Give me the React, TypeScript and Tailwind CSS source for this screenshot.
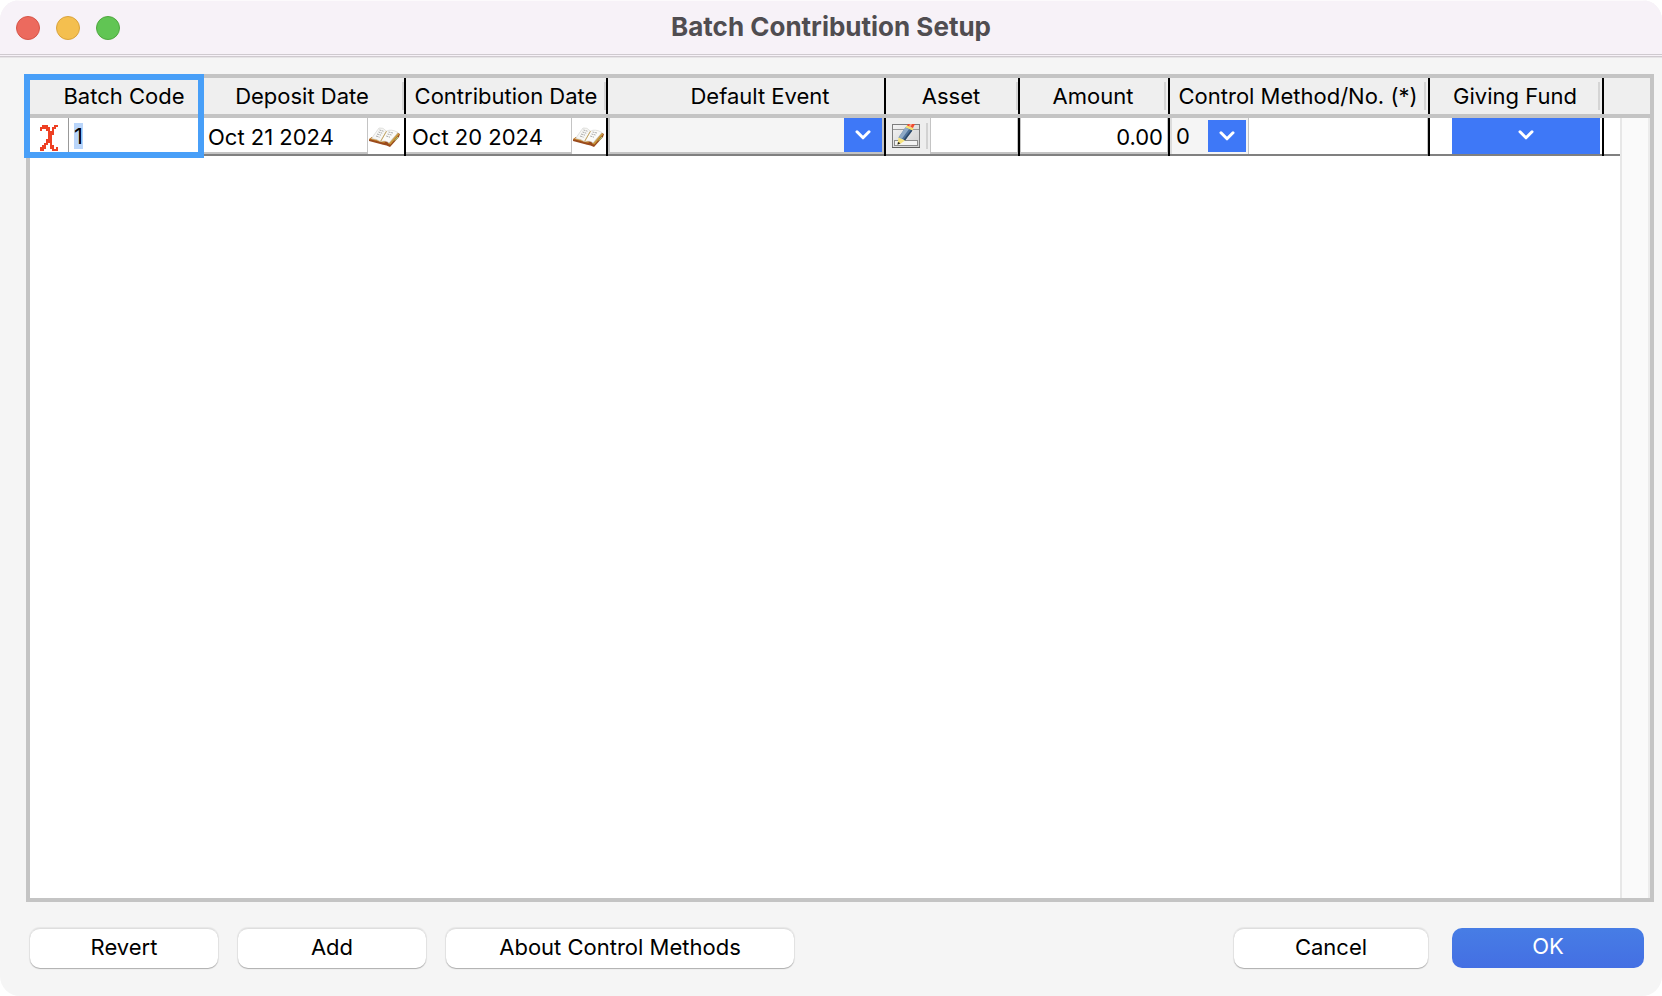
import { useEffect, useRef } from 'react';
import type { ReactNode } from 'react';
import clsx from 'clsx';

const columns = [
    { id: 'batch', title: 'Batch Code', width: 'w-[172px]', cell: 'pl-4' },
    { id: 'deposit', title: 'Deposit Date', width: 'w-[204px]', cell: 'border-r-2 border-black pr-0.5', grip: 'right-0' },
    { id: 'contribution', title: 'Contribution Date', width: 'w-[202px]', cell: 'border-r-2 border-black', grip: 'right-0' },
    { id: 'event', title: 'Default Event', width: 'w-[278px]', cell: 'border-r-2 border-black pl-7' },
    { id: 'asset', title: 'Asset', width: 'w-[134px]', cell: 'border-r-2 border-black pr-0.5', grip: 'right-0' },
    { id: 'amount', title: 'Amount', width: 'w-[150px]', cell: 'border-r-2 border-black pr-0.5', grip: 'right-0.5' },
    { id: 'control', title: 'Control Method/No. (*)', width: 'w-[260px]', cell: 'border-r-2 border-black pr-0.5', grip: 'right-0.5' },
    { id: 'fund', title: 'Giving Fund', width: 'w-[174px]', cell: 'border-r-2 border-black pr-0.5', grip: 'right-0.5' },
];

// one character per 2px dot
const chiRows = [
    '.XXX...XX',
    'XXXXX.XX.',
    'X..XX.X..',
    '....XXX..',
    '....XXX..',
    '....XX...',
    '....XX...',
    '...XXX...',
    '...XXX...',
    '..XX.X...',
    '.XX..XX..',
    'XXX..XX.X',
    'XX....XXX',
];

const ChiIcon = () => (
    <svg width="18" height="26" viewBox="0 0 9 13" shapeRendering="crispEdges" fill="#ee4023" aria-hidden="true">
        {chiRows.flatMap((row, y) =>
            row.split('').map((dot, x) => (dot === 'X' ? <rect key={`${x}-${y}`} x={x} y={y} width="1" height="1" /> : null))
        )}
    </svg>
);

const BookIcon = () => (
    <svg width="31" height="20" viewBox="0 0 31 20" fill="none" aria-hidden="true">
        <path d="M0 12.5 L3 10 L17 14 L28 5.5 L31 7 L30 10 L21 20 L17.5 18.5 L14 17.8 L0 14 Z" fill="#9a4a1c" />
        <path d="M28.5 6 L30.5 7 L21.5 17.5 L19 17 Z" fill="#c99a3d" />
        <path d="M0 12 L3 10 L16 14.5 L15.5 16 Z" fill="#c9882f" />
        <path d="M2.5 11.5 L10 1 Q14 0 17.5 4.2 L11.5 14.6 Q8 12 2.5 11.5 Z" fill="#f7f7f5" stroke="#cfcfcb" strokeWidth=".6" />
        <path d="M17.5 4.2 Q22 1.5 29 5.5 L20 16 Q17 13 11.5 14.6 Z" fill="#fbfbf9" stroke="#cfcfcb" strokeWidth=".6" />
        <path d="M17.5 4.2 L11.5 14.6" stroke="#c6a45e" strokeWidth="1" />
        <path d="M10.5 3 L14.5 4.2 M9.5 5 L13.2 6.2 M8 7 L12 8.2 M7 9 L10.5 10.2 M19.5 5 L24 6 M18.5 7 L22.5 8 M17.2 9 L21 10.2" stroke="#a3a3a3" strokeWidth=".9" strokeDasharray="2 .6" />
        <path d="M29 10 L26 13.5" stroke="#9fdc8d" strokeWidth="1" />
    </svg>
);

const PencilIcon = () => (
    <svg width="28" height="24" viewBox="0 0 28 24" fill="none" aria-hidden="true">
        <defs>
            <linearGradient id="panel" x1="0" y1="0" x2="1" y2="1">
                <stop offset="0" stopColor="#f4f4f4" />
                <stop offset="1" stopColor="#cfcfcf" />
            </linearGradient>
        </defs>
        <rect x=".5" y=".5" width="27" height="23" fill="url(#panel)" stroke="#7d7d7d" />
        <path d="M1 5.5 H27" stroke="#9a9a9a" />
        <path d="M0 23.5 H28" stroke="#5e5e5e" />
        <rect x="2.5" y="16.5" width="23" height="5" fill="#f3f3f3" stroke="#8c8c8c" />
        <path d="M16 0 H23 L21 4 L15 2 Z" fill="#ef4b2f" />
        <path d="M18 0 H20 L18.5 3.2 L16.8 2.6 Z" fill="#f9a08b" />
        <path d="M14.6 1.5 L21.6 4.5 L20.4 6.6 L13.4 3.6 Z" fill="#f4df6a" />
        <path d="M13.4 3.6 L20.4 6.6 L13 16.5 L6.5 13.5 Z" fill="#4d7199" />
        <path d="M13.4 3.6 L17 5.1 L9.8 15 L6.5 13.5 Z" fill="#8eaac6" />
        <path d="M19 6 L20.4 6.6 L13 16.5 L11.6 15.8 Z" fill="#2c4864" />
        <path d="M6.5 13.5 L13 16.5 L8.8 19.5 L5.5 20.5 Z" fill="#f6e27c" />
        <path d="M5.5 20.7 L6 18 L8.5 19.3 Z" fill="#222" />
    </svg>
);

const Chevron = () => (
    <svg width="16" height="10" viewBox="0 0 16 10" fill="none" stroke="#fff" strokeWidth="3" strokeLinecap="round" strokeLinejoin="round" aria-hidden="true">
        <path d="M2 1.8 L8 7.8 L14 1.8" />
    </svg>
);

const Cell = ({ children, last = false }: { children?: ReactNode; last?: boolean }) => (
    <td className={clsx('p-0', !last && 'border-r-2 border-black')}>
        <div className="flex h-[38px] border-b-2 border-[#808080]">{children}</div>
    </td>
);

const DateField = ({ label, value, picker }: { label: string; value: string; picker: string }) => (
    <>
        <input
            aria-label={label}
            defaultValue={value}
            className="min-w-0 flex-1 border-r border-b-2 border-[#c4c4c4] bg-white pt-1 pl-1.5 outline-none"
        />
        <button type="button" aria-label={`Pick ${label}`} className={clsx('flex items-center pt-0.5 pl-px', picker)}>
            <BookIcon />
        </button>
    </>
);

const PushButton = ({ children, className }: { children: ReactNode; className: string }) => (
    <button
        type="button"
        className={clsx('flex h-10 items-center justify-center rounded-[10px] pb-1', className)}
    >
        {children}
    </button>
);

const plain = 'border-t border-[#dedede] bg-white shadow-[0_1px_1px_rgba(0,0,0,0.25),0_0_1px_1px_rgba(0,0,0,0.06)]';

const App = () => {
    const codeRef = useRef<HTMLInputElement>(null);

    useEffect(() => {
        codeRef.current?.focus();
        codeRef.current?.select();
    }, []);

    return (
        <div className="h-screen bg-white font-['Inter',sans-serif] text-[22px] leading-[30px] text-black">
            <div className="flex h-full flex-col overflow-hidden rounded-[20px] bg-[#f5f5f5]">
                {/* Title bar */}
                <header className="relative flex h-[58px] shrink-0 items-start border-t border-b-2 border-t-[#fcfafc] border-b-[#e6e4e6] bg-[#f7f2f8]">
                    <div className="flex h-[56px] w-full items-start justify-center border-b border-[#cfcacf]">
                        <div className="flex h-[54px] w-full items-start justify-center border-b border-[#cfcacf] pt-2.5">
                            <h1 className="text-[26px] leading-8 font-bold text-[#504d51]">Batch Contribution Setup</h1>
                        </div>
                    </div>
                    <div className="absolute top-[15px] left-4 flex gap-4">
                        <button type="button" aria-label="Close" className="size-6 rounded-full border border-[#d65548] bg-[#ec6a5e]" />
                        <button type="button" aria-label="Minimize" className="size-6 rounded-full border border-[#d9a33c] bg-[#f4bf4f]" />
                        <button type="button" aria-label="Zoom" className="size-6 rounded-full border border-[#4fa73f] bg-[#61c554]" />
                    </div>
                </header>

                {/* Batch grid */}
                <main className="relative mt-4 mr-2 ml-[26px] min-h-0 flex-1 border-4 border-[#c4c4c4] bg-white">
                    <table className="h-full w-full table-fixed border-separate border-spacing-0">
                        <colgroup>
                            {columns.map(col => (
                                <col key={col.id} className={col.width} />
                            ))}
                            <col />
                            <col className="w-[30px]" />
                        </colgroup>
                        <thead>
                            <tr className="h-10 bg-[#efefef]">
                                {columns.map(col => (
                                    <th key={col.id} scope="col" className="border-b-4 border-[#c4c4c4] p-0 font-normal whitespace-nowrap">
                                        <div className={clsx('relative flex h-9 items-center justify-center', col.cell)}>
                                            {col.title}
                                            {col.grip && <span className={clsx('absolute top-1 bottom-1 w-0.5 bg-[#d5d5d5]', col.grip)} />}
                                        </div>
                                    </th>
                                ))}
                                <td colSpan={2} className="border-b-4 border-[#c4c4c4] p-0" />
                            </tr>
                        </thead>
                        <tbody>
                            <tr className="h-[38px]">
                                <Cell last>
                                    <span className="flex w-[38px] shrink-0 items-center justify-center pt-1 pr-px">
                                        <ChiIcon />
                                    </span>
                                    <input
                                        ref={codeRef}
                                        aria-label="Batch Code"
                                        defaultValue="1"
                                        className="h-[34px] min-w-0 flex-1 border-l border-[#999] pt-0.5 pl-[5px] outline-none selection:bg-[#b9d5fa] selection:text-black"
                                    />
                                </Cell>
                                <Cell>
                                    <DateField label="Deposit Date" value="Oct 21 2024" picker="w-9" />
                                </Cell>
                                <Cell>
                                    <DateField label="Contribution Date" value="Oct 20 2024" picker="w-[34px]" />
                                </Cell>
                                <Cell>
                                    <div className="relative flex-1 border-x-2 border-b-2 border-[#c4c4c4] bg-[#f5f5f5]">
                                        <select aria-label="Default Event" className="h-full w-full appearance-none outline-none">
                                            <option value="" />
                                        </select>
                                        <span className="pointer-events-none absolute inset-y-0 right-0 flex w-[38px] items-center justify-center bg-[#3e78f7]">
                                            <Chevron />
                                        </span>
                                    </div>
                                </Cell>
                                <Cell>
                                    <button type="button" aria-label="Edit asset" className="flex w-11 shrink-0 items-center gap-1.5 bg-[#eeeeee] pl-1.5">
                                        <PencilIcon />
                                        <span className="h-[26px] w-0.5 bg-[#d2d2d2]" />
                                    </button>
                                    <input
                                        aria-label="Asset"
                                        className="min-w-0 flex-1 border-x border-b-2 border-[#c4c4c4] bg-white outline-none"
                                    />
                                </Cell>
                                <Cell>
                                    <input
                                        aria-label="Amount"
                                        defaultValue="0.00"
                                        className="min-w-0 flex-1 border-x border-b-2 border-[#c4c4c4] bg-white pt-1 pr-1 text-right outline-none"
                                    />
                                </Cell>
                                <Cell>
                                    <div className="relative w-[78px] shrink-0 border-l-2 border-[#dcdcdc] bg-[#f5f5f5]">
                                        <select aria-label="Control Method" className="h-full w-full appearance-none pl-1 outline-none">
                                            <option>0</option>
                                        </select>
                                        <span className="pointer-events-none absolute top-0.5 right-0.5 bottom-0.5 flex w-[38px] items-center justify-center bg-[#3e78f7]">
                                            <Chevron />
                                        </span>
                                    </div>
                                    <input aria-label="Control Number" className="min-w-0 flex-1 border-x border-[#c4c4c4] bg-white outline-none" />
                                </Cell>
                                <Cell>
                                    <div className="relative mr-0.5 ml-[22px] flex-1 bg-[#3e78f7]">
                                        <select aria-label="Giving Fund" className="h-full w-full appearance-none outline-none">
                                            <option value="" />
                                        </select>
                                        <span className="pointer-events-none absolute inset-0 flex items-center justify-center pb-0.5">
                                            <Chevron />
                                        </span>
                                    </div>
                                </Cell>
                                <Cell last />
                                <td rowSpan={2} className="border-x-2 border-l-[#e7e7e7] border-r-[#ececec] bg-[#fafafa] p-0" />
                            </tr>
                            <tr>
                                <td colSpan={9} className="p-0" />
                            </tr>
                        </tbody>
                    </table>
                    {/* Focus ring around the active column */}
                    <div className="pointer-events-none absolute -top-1 -left-1.5 h-[84px] w-[180px] border-6 border-[#489ff8]" />
                </main>

                <footer className="flex shrink-0 justify-between pt-[26px] pr-[18px] pb-7 pl-[30px]">
                    <div className="flex gap-5">
                        <PushButton className={clsx(plain, 'w-[188px]')}>Revert</PushButton>
                        <PushButton className={clsx(plain, 'w-[188px]')}>Add</PushButton>
                        <PushButton className={clsx(plain, 'w-[348px]')}>About Control Methods</PushButton>
                    </div>
                    <div className="flex gap-6">
                        <PushButton className={clsx(plain, 'w-[194px]')}>Cancel</PushButton>
                        <PushButton className="w-[192px] bg-linear-to-b from-[#477de5] to-[#446fe3] text-white">OK</PushButton>
                    </div>
                </footer>
            </div>
        </div>
    );
};

export default App;
